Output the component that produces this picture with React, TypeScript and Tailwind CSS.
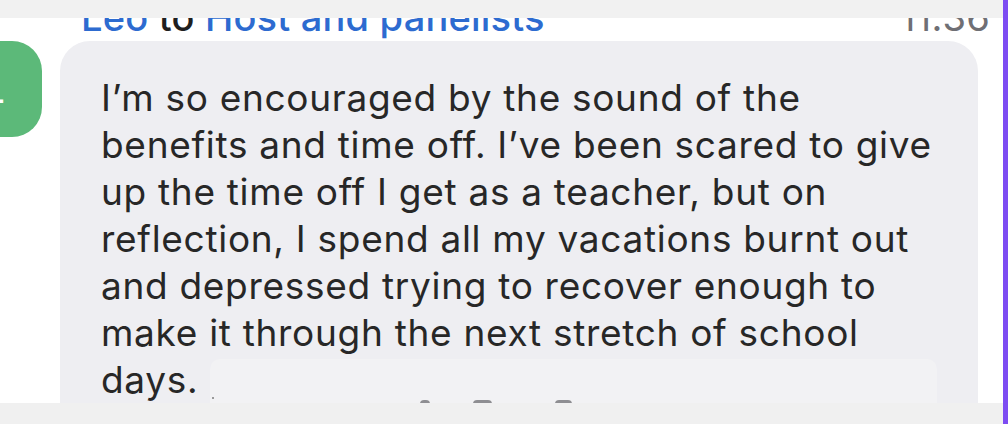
import React from 'react';

const lines = [
  'I’m so encouraged by the sound of the',
  'benefits and time off. I’ve been scared to give',
  'up the time off I get as a teacher, but on',
  'reflection, I spend all my vacations burnt out',
  'and depressed trying to recover enough to',
  'make it through the next stretch of school',
  'days.',
];

const App = () => {
  return (
    <div
      className="w-[1008px] h-[424px] flex overflow-hidden bg-white"
      style={{ fontFamily: 'Inter, "Noto Sans", sans-serif' }}
    >
      <div className="flex-1 flex flex-col min-w-0">
        {/* top bar */}
        <div className="h-[18px] shrink-0 bg-[#f1f1f1] relative z-10" />

        {/* chat area */}
        <div className="flex-1 min-h-0 overflow-hidden">
          {/* sender row */}
          <div className="mt-[-23px] h-[44px] flex items-center justify-between pl-[81px] pr-[13px] text-[38px] leading-[44px] tracking-[0.2px] whitespace-nowrap">
            <div className="font-medium">
              <span className="text-[#2d6bd0]">Leo</span>
              <span className="text-[#1f1f1f]"> to </span>
              <span className="text-[#2d6bd0]">Host and panelists</span>
            </div>
            <span className="text-[#6f6f74]">11:36</span>
          </div>

          {/* message */}
          <div className="flex items-start mt-[2px] pr-[25px]">
            <div className="ml-[-54px] w-[96px] h-[96px] shrink-0 rounded-[30px] bg-[#5cb979] flex items-center justify-center text-white text-[38px] font-medium">
              L
            </div>
            <div className="ml-[18px] flex-1 relative rounded-[30px] bg-[#eeeef2] pt-[33px] pl-[41px] pb-[40px] text-[#272727] text-[37px] leading-[47px] tracking-[0.7px]">
              {lines.map((l) => (
                <div key={l} className="whitespace-nowrap">
                  {l}
                </div>
              ))}
              {/* hover toolbar peeking in */}
              <div className="absolute left-[150px] right-[41px] top-[318px] h-[80px] rounded-[10px] bg-[#f2f2f4]">
                <div className="absolute left-[2px] top-[38px] w-[2px] h-[2px] bg-[#9a9a9a]" />
                <div className="absolute left-[210px] top-[41px] w-[10px] h-[4px] rounded-t-full bg-[#8e8e92]" />
                <div className="absolute left-[263px] top-[41px] w-[19px] h-[4px] rounded-t-sm bg-[#8e8e92]" />
                <div className="absolute left-[345px] top-[41px] w-[17px] h-[4px] rounded-t-sm bg-[#8e8e92]" />
              </div>
            </div>
          </div>
        </div>

        {/* bottom bar */}
        <div className="h-[21px] shrink-0 bg-[#f0f0f0]" />
      </div>

      {/* purple edge */}
      <div className="w-[5px] shrink-0 bg-[#7d4cf2]" />
    </div>
  );
};

export default App;
